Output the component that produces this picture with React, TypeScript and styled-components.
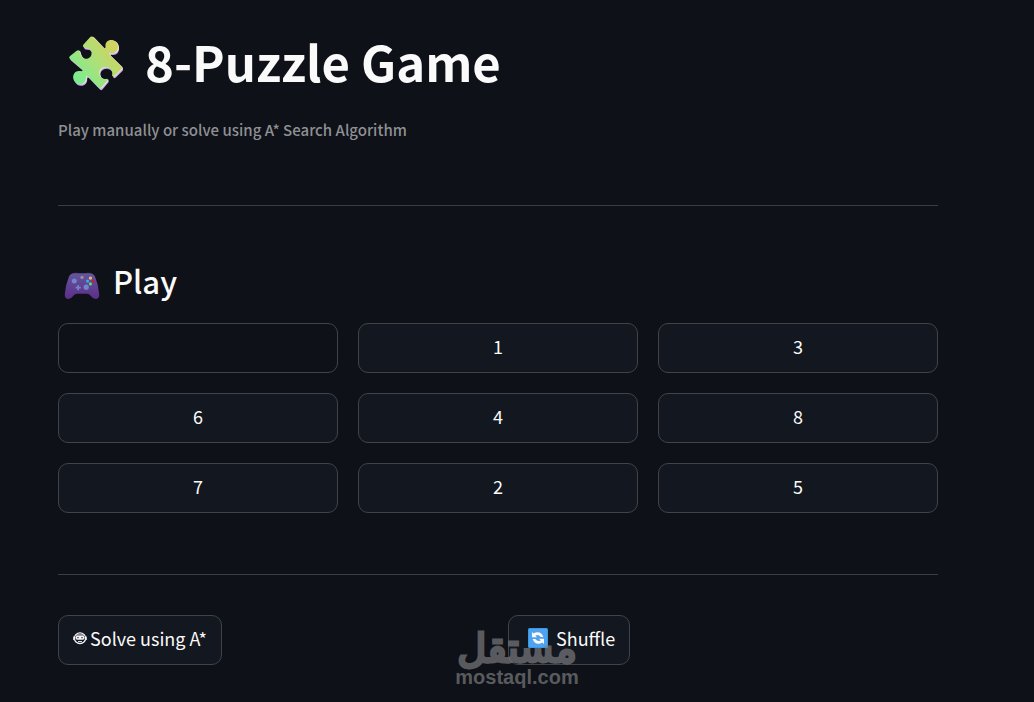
import React from "react";
import styled, { createGlobalStyle } from "styled-components";

const GlobalStyle = createGlobalStyle`
  *, *::before, *::after { box-sizing: border-box; }
  html, body { margin: 0; background: #0e1117; }
  body {
    color: #fafafa;
    font-family: "Noto Sans CJK SC", "Noto Sans", sans-serif;
    font-size: 18px;
  }
`;

const Page = styled.main`
  padding: 28px 96px 32px 58px;
`;

const Title = styled.h1`
  display: flex;
  align-items: flex-start;
  gap: 19px;
  margin: 0;
  padding-left: 8px;
  height: 72px;
  font-size: 49px;
  line-height: 66px;
  font-weight: 700;
  color: #fafafa;
`;

const Caption = styled.p`
  margin: 17px 0 0;
  font-size: 15px;
  line-height: 26px;
  font-weight: 500;
  color: #8f9094;
`;

const Divider = styled.hr`
  margin: 62px 0 0;
  border: 0;
  border-top: 1px solid #3b3d43;
`;

const Heading = styled.h2`
  display: flex;
  align-items: flex-start;
  gap: 13px;
  margin: 52px 0 0;
  padding-left: 6px;
  height: 49px;
  font-size: 31px;
  line-height: 46px;
  font-weight: 500;
  color: #fafafa;
`;

const Board = styled.section`
  display: grid;
  grid-template-columns: repeat(3, 1fr);
  gap: 20px;
  margin: 16px 0 -1px;
`;

const Button = styled.button`
  display: inline-flex;
  align-items: center;
  justify-content: center;
  height: 50px;
  padding: 0 14px 4px;
  border: 1px solid #414349;
  border-radius: 10px;
  background: #13171f;
  color: #fafafa;
  font: inherit;
  line-height: 32px;
  white-space: nowrap;
  cursor: pointer;

  &:disabled {
    background: transparent;
    cursor: not-allowed;
  }
`;

const Actions = styled.section`
  display: grid;
  grid-template-columns: 1fr 1fr;
  justify-items: start;
  gap: 20px;
  margin-top: 40px;
`;

const ActionButton = styled(Button)<{ $gap: number }>`
  gap: ${(p) => p.$gap}px;
`;

const ActionCell = styled.div`
  position: relative;
`;

const Watermark = styled.div`
  position: absolute;
  left: -54px;
  top: 8px;
  width: 126px;
  color: #808184;
  opacity: 0.66;
  text-align: center;
  pointer-events: none;
`;

const WatermarkArabic = styled.div`
  height: 44px;
  font-family: "DejaVu Sans", sans-serif;
  font-size: 40px;
  line-height: 50px;
  -webkit-text-stroke: 3px #808184;
  paint-order: stroke fill;
  stroke-linejoin: round;
  white-space: nowrap;
`;

const WatermarkDomain = styled.div`
  font-family: "Liberation Sans", Arial, sans-serif;
  font-size: 20px;
  line-height: 20px;
  font-weight: 700;
`;

const PuzzleShape =
  "M30.5 5.7Q32 5 33.3 6.2L43.7 17Q45.5 18.3 45.5 15.5C45 11.5 48 8.7 52 9.1C56.8 9.6 59.3 15 57.2 19C55.8 21.7 53.5 22.6 50.3 22.1Q48.2 22.2 49.7 24L61.4 35.5Q62.6 37 61.3 38.2L54.4 45Q53 46 52 44.5C53.4 40.4 50.2 36.4 46.3 36.1C42 35.7 38.6 39.2 39.2 42.8C39.7 46.3 42.5 48.8 46.3 47.8Q48.4 48.2 47 50L41.3 56.6Q40 58 38.7 56.7L27.7 45.3Q25.8 44 26 46.5C26.2 50.8 23.3 53.4 19.5 53C14.5 52.5 11.8 47.3 13.8 43.2C15.2 40.3 18 39.5 21 40.3Q23.5 40.4 22.1 38.3L9.8 27.8Q8.5 26.5 9.8 25.2L16.7 19.8Q18.8 18.6 19.6 20.5C20.2 25 23 28.4 27.2 27.7C31 27.1 32.7 22.7 30.8 19.5C29.4 17.1 27 17.1 24.4 16.8Q21.8 15.5 23.7 13.3Z";

const PuzzleIcon = () => (
  <svg width="60" height="70" viewBox="6 -3 60 70" aria-hidden="true">
    <defs>
      <linearGradient id="puzzle" x1="12" y1="46" x2="52" y2="14" gradientUnits="userSpaceOnUse">
        <stop offset="0" stopColor="#77ed91" />
        <stop offset=".5" stopColor="#a8e17b" />
        <stop offset="1" stopColor="#d0d35f" />
      </linearGradient>
    </defs>
    <path d={PuzzleShape} fill="#c5a0ec" transform="translate(1.2 1.8)" />
    <path d={PuzzleShape} fill="#ebe2df" transform="translate(1 .4)" />
    <path d={PuzzleShape} fill="url(#puzzle)" />
  </svg>
);

const GamepadIcon = () => (
  <svg width="36" height="50" viewBox="0 -10 36 50" aria-hidden="true">
    <defs>
      <linearGradient id="pad" x1="0" y1="2" x2="0" y2="29" gradientUnits="userSpaceOnUse">
        <stop offset="0" stopColor="#64579f" />
        <stop offset=".55" stopColor="#604091" />
        <stop offset="1" stopColor="#5b2e8b" />
      </linearGradient>
    </defs>
    <g transform="translate(0 2)">
      <path d="M7 5Q8 2.2 13 2.5L15 4ZM29 5Q28 2.2 23 2.5L21 4Z" fill="#292833" />
      <path d="M5 6.5Q6.3 3.6 10 3.3H26Q29.7 3.6 31 6.5Q34.2 14 35.2 24Q35.5 29 31.5 29Q28.8 29 26.6 25.8Q25.3 23.7 23 23.7H13Q10.7 23.7 9.4 25.8Q7.2 29 4.5 29Q.5 29 .8 24Q1.8 14 5 6.5Z" fill="url(#pad)" />
      <circle cx="10.3" cy="11.1" r="2.5" fill="#7187c8" />
      <circle cx="22.2" cy="17.2" r="2.6" fill="#7187c8" />
      <path d="M14.2 15v5.2M11.6 17.6h5.2" stroke="#7187c8" strokeWidth="1.6" />
      <circle cx="18" cy="7.4" r="1.6" fill="#9a91a2" />
      <circle cx="26.4" cy="8.1" r="1.6" fill="#e9bf6d" />
      <circle cx="23.6" cy="11.1" r="1.6" fill="#36aaf0" />
      <circle cx="29" cy="11.1" r="1.6" fill="#c42332" />
      <circle cx="26.4" cy="13.9" r="1.6" fill="#55d98a" />
    </g>
  </svg>
);

const RobotIcon = () => (
  <svg width="14" height="14" viewBox="0 0 14 14" fill="none" stroke="#f5f5f5" aria-hidden="true">
    <ellipse cx="7" cy="7.2" rx="5.6" ry="5.4" strokeWidth="1.2" />
    <path d="M3 4H11M.7 5.5V9M13.3 5.5V9" strokeWidth="1" />
    <rect x="2.4" y="4.8" width="9.2" height="4" rx="2" fill="#f5f5f5" stroke="none" />
    <path d="M4 7Q5 5.8 6 7M8 7Q9 5.8 10 7" stroke="#252a31" strokeWidth=".8" />
    <path d="M5 10.6H9" strokeWidth="1" />
  </svg>
);

const ShuffleIcon = () => (
  <svg width="25" height="20" viewBox="-5 0 25 20" aria-hidden="true">
    <rect width="20" height="20" rx="1.5" fill="#359be8" />
    <rect x="1" y="1" width="18" height="18" rx="1" fill="#50a2ef" />
    <path d="M4 4V9.2H9L7.3 7.5Q10.5 5.8 12.7 9H15.3Q14 4.3 9.5 4.2Q7.2 4.2 5.6 5.6ZM16 16V10.8H11L12.7 12.5Q9.5 14.2 7.3 11H4.7Q6 15.7 10.5 15.8Q12.8 15.8 14.4 14.4Z" fill="#fafafa" />
  </svg>
);

const tiles = [0, 1, 3, 6, 4, 8, 7, 2, 5];

export default function App() {
  return (
    <>
      <GlobalStyle />
      <Page>
        <Title>
          <PuzzleIcon />
          8-Puzzle Game
        </Title>
        <Caption>Play manually or solve using A* Search Algorithm</Caption>
        <Divider />
        <Heading>
          <GamepadIcon />
          Play
        </Heading>
        <Board aria-label="Puzzle board">
          {tiles.map((tile) => (
            <Button key={tile} type="button" disabled={tile === 0} aria-label={tile === 0 ? "Empty" : undefined}>
              {tile || ""}
            </Button>
          ))}
        </Board>
        <Divider />
        <Actions>
          <ActionButton type="button" $gap={3}>
            <RobotIcon />
            Solve using A*
          </ActionButton>
          <ActionCell>
            <ActionButton type="button" $gap={8}>
              <ShuffleIcon />
              Shuffle
            </ActionButton>
            <Watermark>
              <WatermarkArabic lang="ar">مستقل</WatermarkArabic>
              <WatermarkDomain>mostaql.com</WatermarkDomain>
            </Watermark>
          </ActionCell>
        </Actions>
      </Page>
    </>
  );
}
